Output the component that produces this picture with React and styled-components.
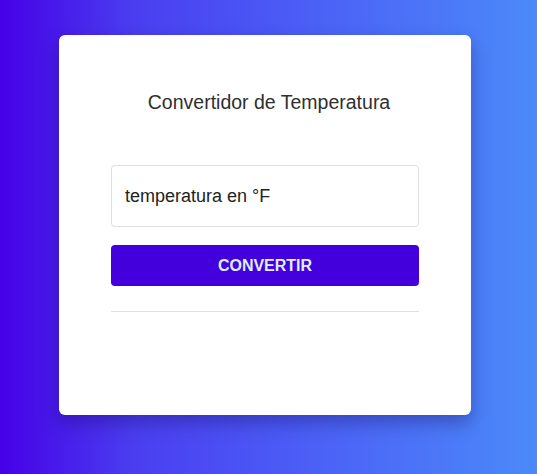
import React from 'react'
import styled, { createGlobalStyle } from 'styled-components';

const Global = createGlobalStyle`
    body {
        margin: 0;
        font-family: "Liberation Sans", Arial, sans-serif;
    }
`;

const App = () => {
    return (
        <Page>
            <Global />
            <Card>
                <Title>Convertidor de Temperatura</Title>
                <Input placeholder="temperatura en °F" />
                <Button>CONVERTIR</Button>
                <Divider />
            </Card>
        </Page>
    )
}

const Page = styled.div`
    min-height: 474px;
    box-sizing: border-box;
    padding: 35px 0 0 59px;
    background: linear-gradient(to right, #4600e6 0%, #4a3ef0 25%, #4b62f6 60%, #4b8af9 100%);
`;

const Card = styled.div`
    width: 412px;
    height: 380px;
    box-sizing: border-box;
    background: white;
    border-radius: 6px;
    padding: 55px 52px 0;
    box-shadow: 0 8px 18px rgba(20, 10, 90, 0.35);
    display: flex;
    flex-direction: column;
`;

const Title = styled.h2`
    margin: 0 0 51px;
    padding-left: 8px;
    text-align: center;
    font-family: "Liberation Sans", Arial, sans-serif;
    font-weight: 400;
    font-size: 19.5px;
    line-height: 24px;
    color: #2f2f2f;
`;

const Input = styled.input`
    height: 62px;
    box-sizing: border-box;
    border: 1px solid #dedede;
    border-radius: 4px;
    padding: 0 13px;
    font-family: "Liberation Sans", Arial, sans-serif;
    font-size: 18px;
    outline: none;
    &::placeholder {
        color: #222;
    }
`;

const Button = styled.button`
    margin-top: 18px;
    height: 41px;
    border: none;
    border-radius: 4px;
    background: #4300dc;
    color: #dcf0ff;
    font-family: "Liberation Sans", Arial, sans-serif;
    font-size: 16px;
    font-weight: 700;
    cursor: pointer;
`;

const Divider = styled.hr`
    margin: 25px 0 0;
    border: none;
    border-top: 1px solid #e0e0e0;
`;

export default App
